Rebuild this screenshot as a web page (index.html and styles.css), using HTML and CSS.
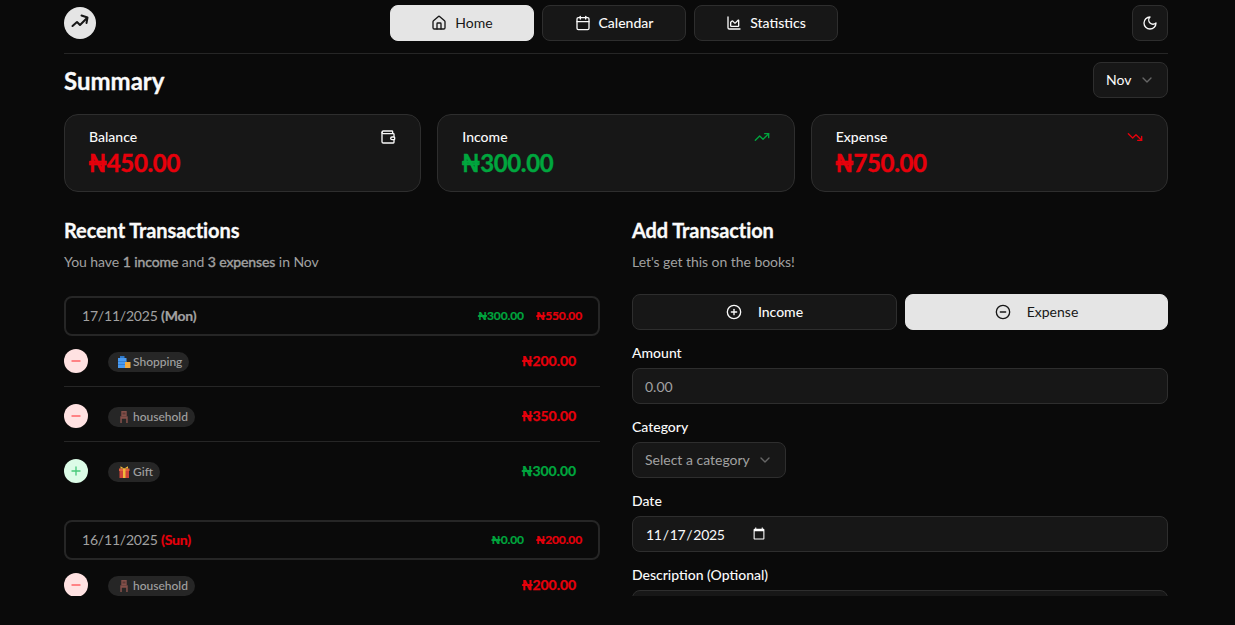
FILE: index.html
```html
<!DOCTYPE html>
<html lang="en">
<head>
<meta charset="utf-8">
<title>Summary</title>
<link rel="stylesheet" href="styles.css">
</head>
<body>
<div class="app">
  <header class="topbar">
    <div class="logo">
      <svg class="ico-logo" viewBox="0 0 18 18"><path d="M1.500 12 6 8l3 3 7-7"/><path d="M10.500 1.500l6 2-1 5.500"/></svg>
    </div>
    <nav class="nav">
      <button class="nav-btn active"><svg class="ico" viewBox="0 0 24 24"><path d="M15 21v-8a1 1 0 0 0-1-1h-4a1 1 0 0 0-1 1v8"/><path d="M3 10a2 2 0 0 1 .709-1.528l7-5.999a2 2 0 0 1 2.582 0l7 5.999A2 2 0 0 1 21 10v9a2 2 0 0 1-2 2H5a2 2 0 0 1-2-2z"/></svg>Home</button>
      <button class="nav-btn"><svg class="ico" viewBox="0 0 24 24"><path d="M8 2v4"/><path d="M16 2v4"/><rect width="18" height="18" x="3" y="4" rx="2"/><path d="M3 10h18"/></svg>Calendar</button>
      <button class="nav-btn"><svg class="ico" viewBox="0 0 24 24"><path d="M3 3v16a2 2 0 0 0 2 2h16"/><path d="M7 11.207a.5.5 0 0 1 .146-.353l2-2a.5.5 0 0 1 .708 0l3.292 3.292a.5.5 0 0 0 .708 0l4.292-4.292a.5.5 0 0 1 .854.353V16a1 1 0 0 1-1 1H8a1 1 0 0 1-1-1z"/></svg>Statistics</button>
    </nav>
    <button class="theme-btn"><svg class="ico" viewBox="0 0 24 24"><path d="M12 3a6 6 0 0 0 9 9 9 9 0 1 1-9-9Z"/></svg></button>
  </header>

  <main class="main">
    <div class="summary-head">
      <h1 class="title">Summary</h1>
      <div class="month-select">Nov<svg class="chev" viewBox="0 0 24 24"><path d="m6 9 6 6 6-6"/></svg></div>
    </div>

    <section class="cards">
      <article class="card">
        <div class="card-top"><span>Balance</span><svg class="ico" viewBox="0 0 24 24"><path d="M19 7V4a1 1 0 0 0-1-1H5a2 2 0 0 0 0 4h15a1 1 0 0 1 1 1v4h-3a2 2 0 0 0 0 4h3a1 1 0 0 0 1-1v-2a1 1 0 0 0-1-1"/><path d="M3 5v14a2 2 0 0 0 2 2h15a1 1 0 0 0 1-1v-4"/></svg></div>
        <div class="card-value red">₦450.00</div>
      </article>
      <article class="card">
        <div class="card-top"><span>Income</span><svg class="ico green" viewBox="0 0 24 24"><path d="M16 7h6v6"/><path d="m22 7-8.500 8.500-5-5L2 17"/></svg></div>
        <div class="card-value green">₦300.00</div>
      </article>
      <article class="card">
        <div class="card-top"><span>Expense</span><svg class="ico red" viewBox="0 0 24 24"><path d="M16 17h6v-6"/><path d="m22 17-8.500-8.500-5 5L2 7"/></svg></div>
        <div class="card-value red">₦750.00</div>
      </article>
    </section>

    <div class="columns">
      <section class="col">
        <h2 class="heading">Recent Transactions</h2>
        <p class="sub">You have <b>1 income</b> and <b>3 expenses</b> in Nov</p>

        <div class="day">
          <div class="day-date">17/11/2025 <b>(Mon)</b></div>
          <div class="day-totals"><span class="green">₦300.00</span><span class="red">₦550.00</span></div>
        </div>
        <div class="row">
          <span class="dot minus"><svg viewBox="0 0 24 24"><path d="M6 12h12"/></svg></span>
          <span class="badge"><svg class="emo" viewBox="0 0 14 14"><path d="M1 3h8.500v10H1z" fill="#4a9af0"/><path d="M1 6h8.500v.7H1zM1 9h8.500v.7H1z" fill="#2f78c8"/><path d="M3 1h4.500v2H3z" fill="#2f78c8"/><path d="M8 7h5.500v6H8z" fill="#f5ab3e"/></svg>Shopping</span>
          <span class="amt red">₦200.00</span>
        </div>
        <div class="row">
          <span class="dot minus"><svg viewBox="0 0 24 24"><path d="M6 12h12"/></svg></span>
          <span class="badge"><svg class="emo" viewBox="0 0 14 14"><path d="M4.300 1h5.400v5H4.300zM3.300 6.300h7.400v2.400H3.300zM3.300 8.700h1.500V13H3.300zM9.200 8.700h1.500V13H9.200z" fill="#85504a"/><path d="M5.500 2.500h3v2h-3z" fill="#5e3a37"/></svg>household</span>
          <span class="amt red">₦350.00</span>
        </div>
        <div class="row">
          <span class="dot plus"><svg viewBox="0 0 24 24"><path d="M6 12h12"/><path d="M12 6v12"/></svg></span>
          <span class="badge"><svg class="emo" viewBox="0 0 14 14"><path d="M2.500 5.500h9.500V13H2.500z" fill="#d0453a"/><path d="M2 3.500h10.500v2.500H2z" fill="#e0603f"/><path d="M6 3.500h2.500V13H6z" fill="#f2b93b"/><path d="M3.500 1.200 7.200 3.500 11 1.200V3.500H3.500z" fill="#f2b93b"/></svg>Gift</span>
          <span class="amt green">₦300.00</span>
        </div>

        <div class="day day-next">
          <div class="day-date">16/11/2025 <b class="red">(Sun)</b></div>
          <div class="day-totals"><span class="green">₦0.00</span><span class="red">₦200.00</span></div>
        </div>
        <div class="row">
          <span class="dot minus"><svg viewBox="0 0 24 24"><path d="M6 12h12"/></svg></span>
          <span class="badge"><svg class="emo" viewBox="0 0 14 14"><path d="M4.300 1h5.400v5H4.300zM3.300 6.300h7.400v2.400H3.300zM3.300 8.700h1.500V13H3.300zM9.200 8.700h1.500V13H9.200z" fill="#85504a"/><path d="M5.500 2.500h3v2h-3z" fill="#5e3a37"/></svg>household</span>
          <span class="amt red">₦200.00</span>
        </div>
      </section>

      <section class="col">
        <h2 class="heading">Add Transaction</h2>
        <p class="sub">Let's get this on the books!</p>

        <div class="toggle">
          <button class="tog income"><svg class="ico" viewBox="0 0 24 24"><circle cx="12" cy="12" r="10"/><path d="M8 12h8"/><path d="M12 8v8"/></svg>Income</button>
          <button class="tog active"><svg class="ico" viewBox="0 0 24 24"><circle cx="12" cy="12" r="10"/><path d="M8 12h8"/></svg>Expense</button>
        </div>

        <label class="label">Amount</label>
        <input class="field" type="text" placeholder="0.00">
        <label class="label">Category</label>
        <div class="cat-select">Select a category<svg class="chev" viewBox="0 0 24 24"><path d="m6 9 6 6 6-6"/></svg></div>
        <label class="label">Date</label>
        <input class="field date" type="date" value="2025-11-17">
        <label class="label">Description (Optional)</label>
        <input class="field" type="text">
      </section>
    </div>
  </main>
</div>
</body>
</html>
```
FILE: styles.css
```css
* { box-sizing: border-box; }
html, body { margin: 0; height: 100%; }
body {
  background: #0a0a0a;
  color: #fafafa;
  font-family: Lato, "Liberation Sans", sans-serif;
  font-size: 14px;
  overflow: hidden;
  color-scheme: dark;
}
button { font-family: inherit; }
.red { color: #e7000b; }
.green { color: #00a63e; }
.ico {
  width: 16px; height: 16px; flex: none;
  fill: none; stroke: currentColor; stroke-width: 2;
  stroke-linecap: round; stroke-linejoin: round;
}
.app { padding: 0 67px 0 64px; height: 596px; overflow: hidden; }
.topbar {
  display: flex; align-items: center; justify-content: space-between;
  height: 54px; padding: 5px 0 12px;
  border-bottom: 1px solid #262626;
}
.logo {
  width: 32px; height: 32px; border-radius: 50%;
  background: #e5e5e5; color: #171717;
  display: flex; align-items: center; justify-content: center;
}
.ico-logo { width: 18px; height: 18px; fill: none; stroke: currentColor; stroke-width: 2; stroke-linecap: round; stroke-linejoin: round; }
.nav { display: flex; gap: 8px; }
.nav-btn {
  width: 144px; height: 36px; padding: 0 0 2px;
  display: flex; align-items: center; justify-content: center; gap: 8px;
  background: #171717; color: #fafafa;
  border: 1px solid #2e2e2e; border-radius: 8px;
  font-size: 14px; font-weight: 500;
}
.nav-btn .ico { margin-top: 2px; }
.nav-btn.active { background: #e5e5e5; color: #171717; border-color: #e5e5e5; font-weight: 400; }
.theme-btn {
  width: 36px; height: 36px; padding: 0;
  display: flex; align-items: center; justify-content: center;
  background: #171717; color: #fafafa;
  border: 1px solid #2e2e2e; border-radius: 8px;
}
.summary-head {
  display: flex; align-items: center; justify-content: space-between;
  padding-top: 8px; margin-bottom: 16px;
}
.title { margin: 0; padding-top: 2px; font-size: 24px; line-height: 32px; font-weight: 700; -webkit-text-stroke: 0.3px currentColor; }
.month-select {
  width: 75px; height: 36px; padding: 0 12px 1px;
  display: flex; align-items: center; justify-content: space-between;
  background: #171717; border: 1px solid #2e2e2e; border-radius: 8px;
}
.chev { width: 16px; height: 16px; fill: none; stroke: #666; stroke-width: 2; stroke-linecap: round; stroke-linejoin: round; flex: none; }
.cards { display: grid; grid-template-columns: repeat(3, 1fr); gap: 16px; }
.card {
  height: 78px; padding: 12px 24px;
  background: #171717; border: 1px solid #2e2e2e; border-radius: 14px;
}
.card-top { display: flex; align-items: center; justify-content: space-between; line-height: 20px; font-weight: 500; }
.card-value { margin-left: -1px; font-size: 24px; line-height: 32px; font-weight: 700; letter-spacing: -0.35px; -webkit-text-stroke: 0.4px currentColor; }
.columns { display: grid; grid-template-columns: 1fr 1fr; gap: 32px; margin-top: 24px; }
.heading { margin: 0; font-size: 20px; line-height: 28px; font-weight: 700; letter-spacing: -0.1px; -webkit-text-stroke: 0.3px currentColor; }
.sub { margin: 8px 0 0; line-height: 20px; color: #a1a1a1; letter-spacing: -0.05px; }
.sub b { font-weight: 400; letter-spacing: -0.1px; -webkit-text-stroke: 0.4px currentColor; }
.day {
  margin-top: 24px; height: 40px; padding: 0 16px 2px;
  display: flex; align-items: center; justify-content: space-between;
  border: 2px solid #262626; border-radius: 8px;
  color: #a1a1a1;
}
.day-next { margin-top: 23px; }
.day-date { letter-spacing: -0.2px; }
.day-date b { font-weight: 700; -webkit-text-stroke: 0.2px currentColor; }
.day-totals { display: flex; gap: 12px; font-size: 12px; font-weight: 700; letter-spacing: -0.15px; -webkit-text-stroke: 0.2px currentColor; }
.row {
  height: 55px; padding: 17px 24px 13px 0;
  display: flex; align-items: flex-start;
  border-bottom: 1px solid #262626;
}
.day + .row { height: 51px; padding-top: 13px; }
.row:has(+ .day) { border-bottom: 0; }
.dot {
  width: 24px; height: 24px; border-radius: 50%; flex: none;
  display: flex; align-items: center; justify-content: center;
}
.dot svg { width: 16px; height: 16px; fill: none; stroke-width: 2; stroke-linecap: round; }
.dot.minus { background: #ffe2e2; stroke: #ff6467; }
.dot.plus { background: #dcfce7; stroke: #47c97a; }
.badge {
  margin: 3px 0 0 20px; height: 20px; padding: 0 7px 1px 9px;
  display: inline-flex; align-items: center; gap: 2px;
  background: #262626; color: #a1a1a1;
  border-radius: 10px; font-size: 12px; font-weight: 500;
}
.emo { width: 14px; height: 14px; flex: none; margin-top: 1px; }
.amt { margin-left: auto; font-weight: 700; line-height: 24px; letter-spacing: -0.07px; -webkit-text-stroke: 0.25px currentColor; }
.toggle { display: flex; gap: 8px; margin-top: 22px; }
.tog {
  flex: 1; height: 36px; padding: 0 0 1px;
  display: flex; align-items: center; justify-content: center; gap: 16px;
  background: #171717; color: #fafafa;
  border: 1px solid #2e2e2e; border-radius: 8px;
  font-size: 14px; font-weight: 500;
}
.tog.income { flex: none; width: 265px; }
.tog.active { background: #e5e5e5; color: #171717; border-color: #e5e5e5; font-weight: 400; }
.label { display: block; margin: 14px 0 6px; line-height: 18px; font-weight: 500; }
.field {
  display: block; width: 100%; height: 36px; padding: 0 12px;
  background: #171717; color: #fafafa;
  border: 1px solid #2e2e2e; border-radius: 8px;
  font-family: inherit; font-size: 14px;
}
.field::placeholder { color: #a1a1a1; }
.date { letter-spacing: -0.3px; }
.date::-webkit-datetime-edit { flex: none; }
.date::-webkit-calendar-picker-indicator { margin-left: 1px; }
.cat-select {
  width: 154px; height: 36px; padding: 0 12px 1px;
  display: flex; align-items: center; justify-content: space-between;
  background: #171717; color: #a1a1a1;
  border: 1px solid #2e2e2e; border-radius: 8px;
}
```
